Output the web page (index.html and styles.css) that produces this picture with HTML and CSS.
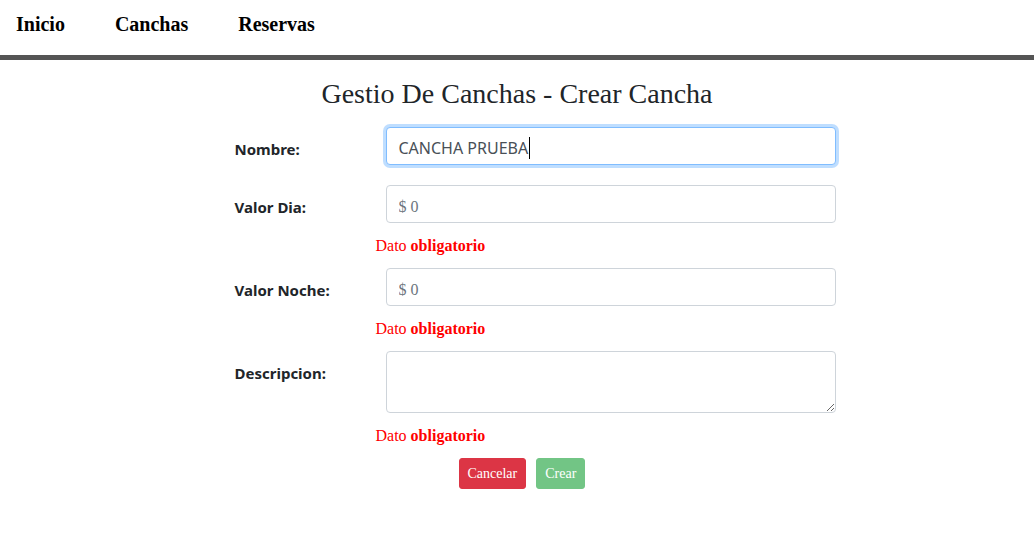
FILE: index.html
```html
<!DOCTYPE html>
<html lang="es">
<head>
<meta charset="utf-8">
<title>Gestio De Canchas - Crear Cancha</title>
<link rel="stylesheet" href="styles.css">
</head>
<body>
<nav class="topnav">
  <a class="nav-link" href="#">Inicio</a>
  <a class="nav-link" href="#">Canchas</a>
  <a class="nav-link" href="#">Reservas</a>
</nav>
<main class="page">
  <h3 class="page-title">Gestio De Canchas - Crear Cancha</h3>
  <form class="form">
    <div class="row">
      <label class="label">Nombre:</label>
      <div class="control control-focus"><span class="value">CANCHA PRUEBA</span><span class="caret"></span></div>
    </div>
    <div class="row">
      <label class="label">Valor Dia:</label>
      <input class="control money" type="text" value="$ 0">
    </div>
    <div class="error">Dato <b>obligatorio</b></div>
    <div class="row">
      <label class="label">Valor Noche:</label>
      <input class="control money" type="text" value="$ 0">
    </div>
    <div class="error">Dato <b>obligatorio</b></div>
    <div class="row">
      <label class="label">Descripcion:</label>
      <textarea class="control textarea" rows="2"></textarea>
    </div>
    <div class="error">Dato <b>obligatorio</b></div>
    <div class="actions">
      <button type="button" class="btn btn-danger">Cancelar</button>
      <button type="button" class="btn btn-success" disabled>Crear</button>
    </div>
  </form>
</main>
</body>
</html>
```
FILE: styles.css
```css
html, body {
  margin: 0;
  padding: 0;
  background: #fff;
  font-family: "Liberation Serif", "Times New Roman", serif;
  color: #000;
}

.topnav {
  display: flex;
  gap: 50px;
  padding: 13px 16px 19px;
  border-bottom: 5px solid #555;
}

.nav-link {
  font-size: 20px;
  font-weight: bold;
  color: #000;
  text-decoration: none;
  line-height: 23px;
}

.page {
  display: flex;
  flex-direction: column;
  align-items: center;
}

.page-title {
  margin: 18px 0 17px;
  font-size: 28px;
  font-weight: normal;
  line-height: 32px;
  color: #212529;
}

.form {
  width: 601px;
  margin-left: 36px;
  display: flex;
  flex-direction: column;
}

.row {
  display: flex;
  align-items: flex-start;
}

.row + .row {
  margin-top: 20px;
}

.label {
  width: 151px;
  flex: none;
  padding-top: 13px;
  font-family: "Noto Sans", "Open Sans", sans-serif;
  font-size: 15px;
  font-weight: bold;
  line-height: 18px;
  color: #212529;
}

.control {
  box-sizing: border-box;
  width: 450px;
  height: 38px;
  padding: 6px 12px;
  border: 1px solid #ced4da;
  border-radius: 4px;
  background: #fff;
  font-family: "Noto Sans", "Open Sans", sans-serif;
  font-size: 16px;
  line-height: 24px;
  color: #495057;
  outline: none;
  margin: 0;
}

.control-focus {
  border-color: #80bdff;
  box-shadow: 0 0 0 3px rgba(0, 123, 255, 0.25);
  display: flex;
  align-items: center;
  padding-top: 8px;
  padding-bottom: 4px;
}

.caret {
  display: inline-block;
  width: 1px;
  height: 22px;
  background: #000;
  margin-left: 1px;
}

.money {
  font-family: "Liberation Serif", "Times New Roman", serif;
  color: #6c757d;
  padding-top: 9px;
  padding-bottom: 3px;
}

.textarea {
  height: 62px;
  resize: vertical;
}

.error {
  margin: 14px 0 13px 140px;
  padding-left: 1px;
  font-size: 16px;
  line-height: 18px;
  color: #ff0000;
}

.actions {
  display: flex;
  gap: 10px;
  margin-left: 224px;
}

.btn {
  height: 31px;
  padding: 4px 8px;
  border: 1px solid transparent;
  border-radius: 3px;
  font-family: "Liberation Serif", "Times New Roman", serif;
  font-size: 14px;
  line-height: 21px;
  color: #fff;
  cursor: pointer;
}

.btn-danger {
  background: #dc3545;
  border-color: #dc3545;
}

.btn-success {
  background: #28a745;
  border-color: #28a745;
  opacity: 0.65;
  cursor: default;
}
```
